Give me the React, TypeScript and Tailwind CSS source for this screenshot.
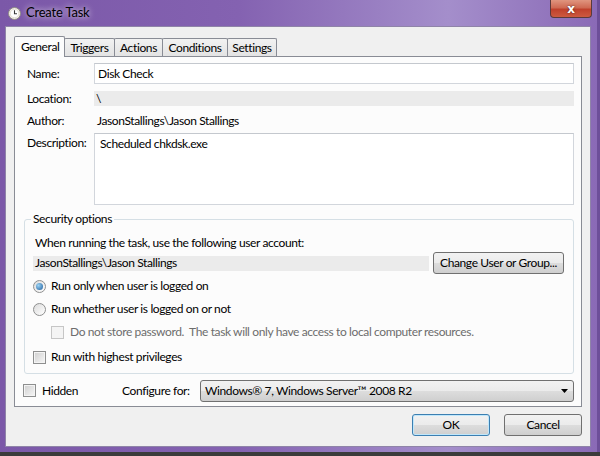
import React from 'react';

const font = { fontFamily: '"Segoe UI", Lato, "Noto Sans", sans-serif' };

const btnBase =
    'h-[22px] rounded-[3px] border bg-[linear-gradient(#f2f2f2_0%,#ebebeb_49%,#dddddd_50%,#cfcfcf_100%)] text-[12px] text-black flex items-center whitespace-nowrap';

const Radio = ({ checked }: { checked?: boolean }) => (
    <span className="w-[13px] h-[13px] rounded-full border border-[#8e8f8f] bg-[linear-gradient(135deg,#dcdcdc,#ffffff)] flex items-center justify-center shrink-0">
        {checked && <span className="w-[7px] h-[7px] rounded-full bg-[radial-gradient(circle_at_35%_35%,#9cd4f5,#1e5d9c)]" />}
    </span>
);

const Check = ({ disabled }: { disabled?: boolean }) => (
    <span
        className={`w-[13px] h-[13px] border shrink-0 ${
            disabled
                ? 'border-[#c6c6c6] bg-[#f4f4f4]'
                : 'border-[#8e8f8f] bg-[linear-gradient(135deg,#cfcfcf,#f7f7f7)] shadow-[inset_0_0_0_1px_#f4f4f4]'
        }`}
    />
);

const tabs = [
    { label: 'Triggers', w: 'w-[51px]' },
    { label: 'Actions', w: 'w-[49px]' },
    { label: 'Conditions', w: 'w-[66px]' },
    { label: 'Settings', w: 'w-[50px]' },
];

export default function App() {
    return (
        <div className="w-[600px] h-[456px] bg-[#3b3b3b] overflow-hidden whitespace-nowrap tracking-[-0.38px]" style={font}>
            <div className="h-[452px] flex flex-col bg-[linear-gradient(90deg,#7b58a8_0%,#8462b1_40%,#a48ecb_75%,#8a6ab6_100%)] border-r-[3px] border-[#6d4f99]">
                {/* title bar */}
                <div className="h-[26px] flex items-start shrink-0">
                    <div className="flex items-center h-[26px] pl-[8px] gap-[5px]">
                        <svg width="13" height="13" viewBox="0 0 13 13">
                            <circle cx="6.5" cy="6.5" r="6" fill="#f3efe6" stroke="#8d8a84" />
                            <circle cx="6.5" cy="6.5" r="4.2" fill="#ffffff" stroke="#d8d2c4" strokeWidth="0.6" />
                            <path d="M6.5 3.2 V6.7 H9" stroke="#3a3a3a" strokeWidth="1.1" fill="none" />
                        </svg>
                        <span className="text-[13px] text-black tracking-[-0.2px] [text-shadow:0_0_6px_#ffffff]">Create Task</span>
                    </div>
                    <div className="ml-auto mr-[5px] w-[42px] h-[18px] rounded-b-[4px] border border-t-0 border-[#5b3a3a] bg-[linear-gradient(#e0957f_0%,#cf6a53_45%,#c0412c_55%,#cd5a40_100%)] flex items-center justify-center">
                        <span className="text-white font-bold text-[12px] leading-none [text-shadow:0_0_2px_#3a1a1a]" style={{ fontFamily: '"DejaVu Sans", sans-serif' }}>
                            x
                        </span>
                    </div>
                </div>

                {/* client */}
                <div className="flex-1 ml-[5px] mr-[6px] mb-[5px] bg-[#f0f0f0] border border-[#8f84a8] flex flex-col pl-[8px] pr-[8px]">
                    {/* tabs */}
                    <div className="flex items-end h-[29px] pt-[8px]">
                        <div className="w-[51px] h-[21px] pl-[6px] bg-[#fcfcfc] border border-b-0 border-[#898c95] rounded-t-[2px] flex items-center text-[12px] relative z-10 -mb-px">
                            General
                        </div>
                        {tabs.map((t) => (
                            <div
                                key={t.label}
                                className={`${t.w} h-[18px] -ml-px justify-center bg-[linear-gradient(#f2f2f2,#e3e3e3)] border border-b-0 border-[#898c95] rounded-t-[2px] flex items-center text-[12px]`}
                            >
                                {t.label}
                            </div>
                        ))}
                    </div>

                    {/* panel */}
                    <div className="h-[351px] border border-[#898c95] bg-[#fcfcfc] flex flex-col pl-[12px] pr-[7px] text-[12px] text-black">
                        <div className="flex items-center mt-[6px] h-[21px]">
                            <span className="w-[67px]">Name:</span>
                            <div className="flex-1 h-[21px] border border-[#d2d6dc] border-t-[#c4c8ce] bg-white flex items-center px-[3px]">Disk Check</div>
                        </div>
                        <div className="flex items-center mt-[7px] h-[15px]">
                            <span className="w-[67px]">Location:</span>
                            <div className="flex-1 h-[15px] bg-[#ebebeb] flex items-center px-[2px]">\</div>
                        </div>
                        <div className="flex items-center mt-[7px] h-[16px]">
                            <span className="w-[67px]">Author:</span>
                            <span className="pl-[3px]">JasonStallings\Jason Stallings</span>
                        </div>
                        <div className="flex mt-[4px] h-[72px]">
                            <span className="w-[67px] pt-[1px]">Description:</span>
                            <div className="flex-1 border border-[#d2d6dc] border-t-[#c4c8ce] bg-white px-[5px] pt-[1px]">Scheduled chkdsk.exe</div>
                        </div>

                        {/* security options group */}
                        <div className="relative mt-[14px] -ml-[3px] h-[155px] border border-[#d5dfe5] rounded-[3px] flex flex-col pl-[8px] pr-[9px]">
                            <span className="absolute -top-[9px] left-[6px] bg-[#fcfcfc] px-[2px] leading-[16px]">Security options</span>
                            <div className="mt-[15px] h-[16px] flex items-center pl-[2px]">When running the task, use the following user account:</div>
                            <div className="mt-[1px] flex items-center justify-between">
                                <div className="w-[396px] h-[15px] bg-[#ebebeb] flex items-center pl-[2px]">JasonStallings\Jason Stallings</div>
                                <div className={`${btnBase} border-[#707070] justify-center w-[131px]`}>Change User or Group...</div>
                            </div>
                            <div className="mt-[4px] h-[16px] flex items-center gap-[5px]">
                                <Radio checked />
                                <span>Run only when user is logged on</span>
                            </div>
                            <div className="mt-[7px] h-[16px] flex items-center gap-[5px]">
                                <Radio />
                                <span>Run whether user is logged on or not</span>
                            </div>
                            <div className="mt-[7px] h-[16px] flex items-center gap-[6px] pl-[18px] text-[#6d6d6d]">
                                <Check disabled />
                                <span className="whitespace-pre">Do not store password.  The task will only have access to local computer resources.</span>
                            </div>
                            <div className="mt-[9px] h-[16px] flex items-center gap-[5px]">
                                <Check />
                                <span>Run with highest privileges</span>
                            </div>
                        </div>

                        <div className="mt-[6px] flex items-center h-[21px] -ml-[4px]">
                            <Check />
                            <span className="ml-[6px] w-[80px]">Hidden</span>
                            <span className="w-[78px]">Configure for:</span>
                            <div className={`${btnBase} border-[#707070] flex-1 justify-between pl-[4px] pr-[5px]`}>
                                <span>Windows® 7, Windows Server™ 2008 R2</span>
                                <svg width="7" height="4" viewBox="0 0 7 4">
                                    <path d="M0 0 H7 L3.5 4 Z" fill="#000" />
                                </svg>
                            </div>
                        </div>
                    </div>

                    {/* buttons */}
                    <div className="flex justify-end gap-[14px] mt-[7px]">
                        <div className={`${btnBase} border-[#3c7fb1] justify-center w-[78px] shadow-[inset_0_0_0_1px_#c0e7fb]`}>OK</div>
                        <div className={`${btnBase} border-[#707070] justify-center w-[78px]`}>Cancel</div>
                    </div>
                </div>
            </div>
        </div>
    );
}
